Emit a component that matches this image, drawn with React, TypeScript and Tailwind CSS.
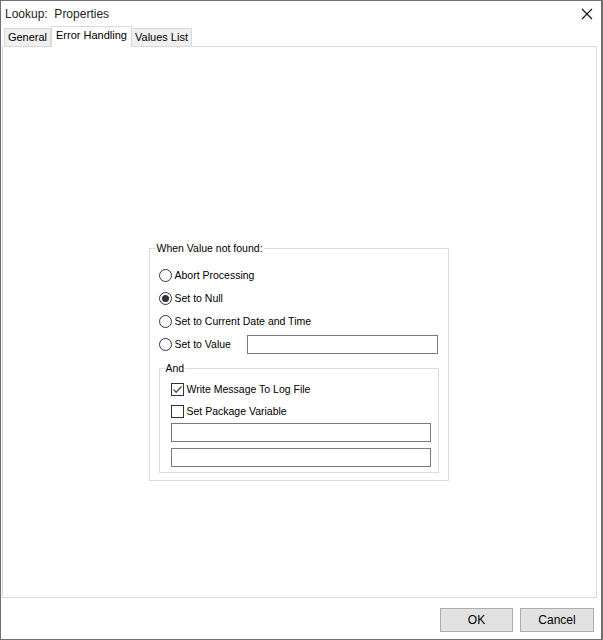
import React from "react";

function Radio({ checked }: { checked?: boolean }) {
  return (
    <span className="flex h-[13px] w-[13px] items-center justify-center rounded-full border border-[#333] bg-white">
      {checked && <span className="h-[7px] w-[7px] rounded-full bg-[#333]" />}
    </span>
  );
}

function Check({ checked }: { checked?: boolean }) {
  return (
    <span className="flex h-[13px] w-[13px] items-center justify-center border border-[#333] bg-white">
      {checked && (
        <svg width="11" height="11" viewBox="0 0 11 11">
          <path d="M1.5 5.5 L4.2 8.2 L9.5 2.5" fill="none" stroke="#555" strokeWidth="1.4" />
        </svg>
      )}
    </span>
  );
}

function Field({ className }: { className: string }) {
  return <div className={`h-[19px] border border-[#7a7a7a] bg-white ${className}`} />;
}

export default function App() {
  const font = { fontFamily: '"Liberation Sans", Arial, sans-serif' };
  return (
    <div
      className="flex h-[640px] w-[603px] flex-col border border-r-2 border-[#6f6f6f] bg-white text-[10.5px] text-black"
      style={font}
    >
      <div className="flex h-[26px] items-center justify-between pl-[4px] pr-[8px]">
        <span className="text-[12px] text-[#222]">Lookup:&nbsp; Properties</span>
        <svg width="12" height="12" viewBox="0 0 12 12">
          <path d="M1 1 L11 11 M11 1 L1 11" stroke="#111" strokeWidth="1.1" />
        </svg>
      </div>

      <div className="flex h-[19px] items-end pl-[3px] text-[11px]">
        <div className="flex h-[18px] w-[47px] items-center justify-center border border-b-0 border-[#d9d9d9] bg-[#f0f0f0]">General</div>
        <div className="-mb-px z-10 flex h-[21px] w-[81px] items-center justify-center border border-b-0 border-[#d9d9d9] bg-white pb-[3px]">
          Error Handling
        </div>
        <div className="flex h-[18px] w-[60px] items-center justify-center border border-b-0 border-l-0 border-[#d9d9d9] bg-[#f0f0f0]">Values List</div>
      </div>

      <div className="ml-[1px] mr-[4px] flex flex-1 flex-col items-center border border-[#d9d9d9] pr-[2px] pt-[201px]">
        <div className="relative w-[300px] border border-[#dcdcdc] px-[9px] pb-[7px] pt-[20px]">
          <span className="absolute -top-[8px] left-[6px] bg-white px-px">When Value not found:</span>
          <div className="flex flex-col gap-[10px]">
            <div className="flex h-[13px] items-center gap-[3px]">
              <Radio />
              <span>Abort Processing</span>
            </div>
            <div className="flex h-[13px] items-center gap-[3px]">
              <Radio checked />
              <span>Set to Null</span>
            </div>
            <div className="flex h-[13px] items-center gap-[3px]">
              <Radio />
              <span>Set to Current Date and Time</span>
            </div>
            <div className="flex h-[13px] items-center">
              <Radio />
              <span className="ml-[3px]">Set to Value</span>
              <Field className="ml-auto mr-[1px] w-[191px]" />
            </div>
          </div>

          <div className="relative mt-[17px] border border-[#dcdcdc] px-[11px] pb-[5px] pt-[14px]">
            <span className="absolute -top-[8px] left-[5px] bg-white px-px">And</span>
            <div className="flex h-[13px] items-center gap-[3px]">
              <Check checked />
              <span>Write Message To Log File</span>
            </div>
            <div className="mt-[9px] flex h-[13px] items-center gap-[3px]">
              <Check />
              <span>Set Package Variable</span>
            </div>
            <Field className="mt-[5px] w-[260px]" />
            <Field className="mt-[6px] w-[260px]" />
          </div>
        </div>
      </div>

      <div className="flex h-[41px] items-center justify-end gap-[7px] pr-[7px] pt-[2px]">
        <button className="h-[24px] w-[73px] border border-[#adadad] bg-[#e1e1e1] text-[12px]">OK</button>
        <button className="h-[24px] w-[74px] border border-[#adadad] bg-[#e1e1e1] text-[12px]">Cancel</button>
      </div>
    </div>
  );
}
